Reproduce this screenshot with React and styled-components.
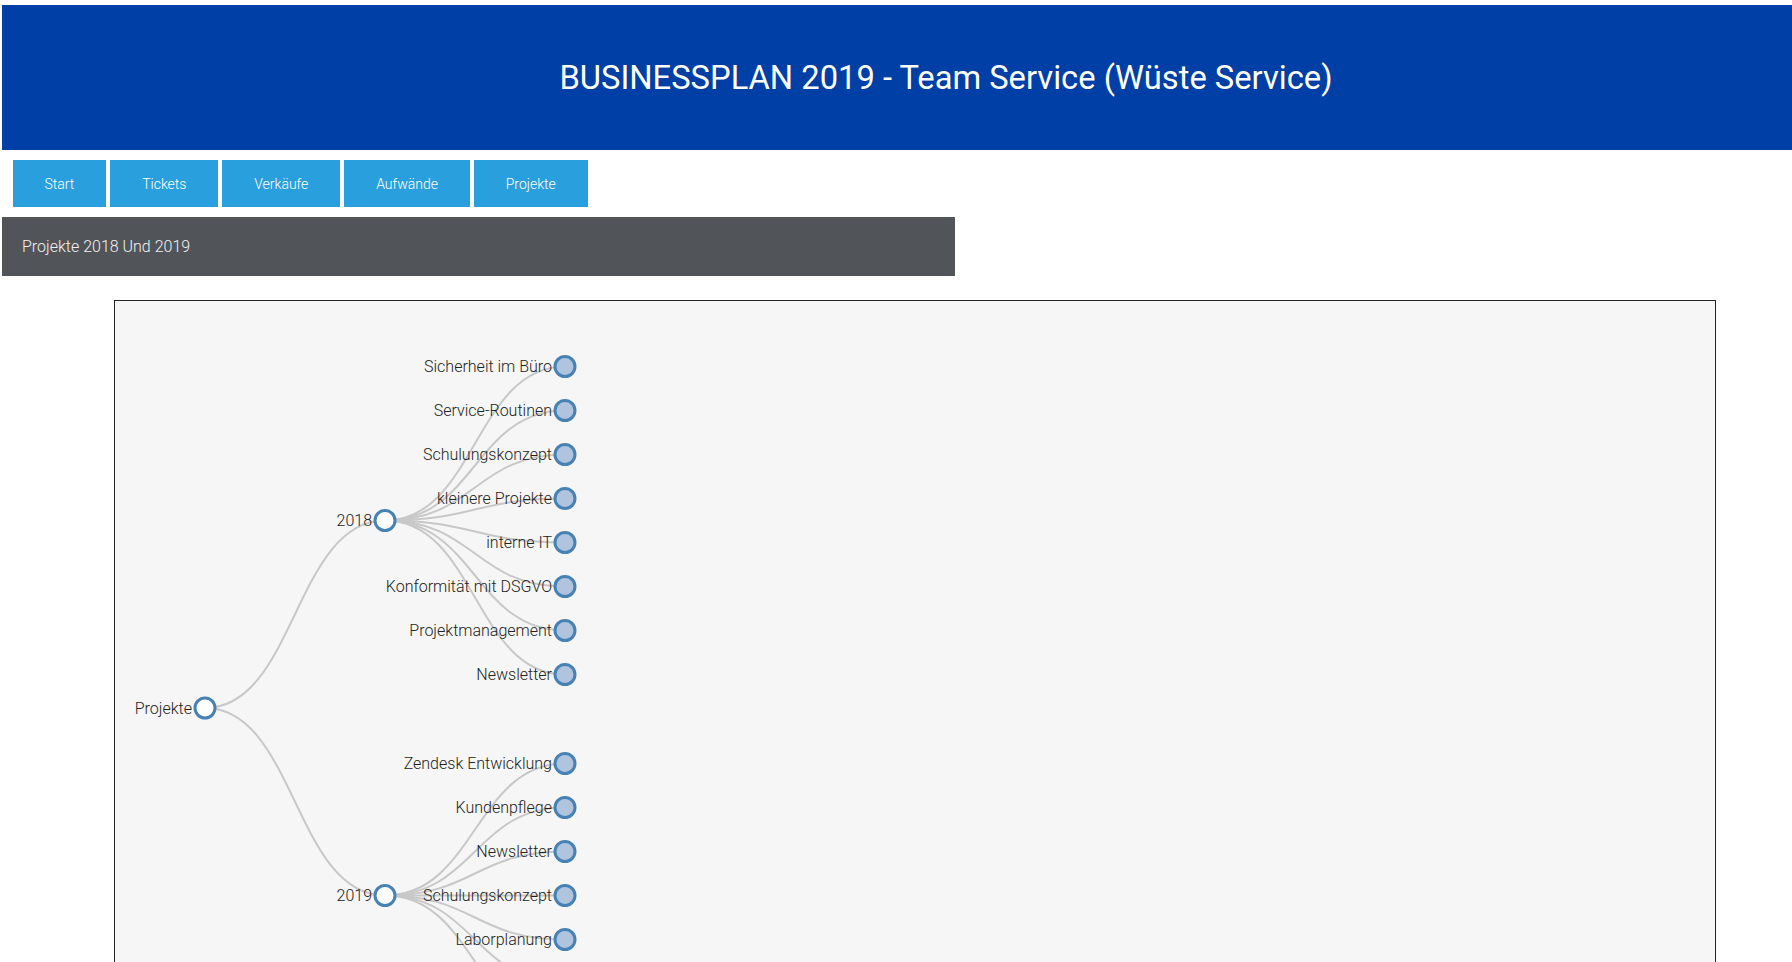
import React from "react";
import styled, { createGlobalStyle } from "styled-components";

const GlobalStyle = createGlobalStyle`
  html, body {
    margin: 0;
    padding: 0;
    background: #ffffff;
    font-family: Roboto, "Liberation Sans", Arial, sans-serif;
    overflow: hidden;
  }
`;

export const Page = styled.div`
  padding: 5px 0 0 2px;
`;
export const Header = styled.header`
  background-color: #003fa5;
  height: 145px;
  display: flex;
  align-items: center;
  justify-content: center;
  padding-left: 98px;
`;
export const Title = styled.h1`
  margin: 0;
  color: #ffffff;
  font-size: 32.7px;
  font-weight: 400;
`;
export const Nav = styled.nav`
  display: flex;
  gap: 3.8px;
  margin: 10px 0 0 10.5px;
`;
export const NavButton = styled.a`
  display: flex;
  align-items: center;
  height: 47px;
  padding: 0 32px;
  background-color: #2a9fdd;
  color: #ffffff;
  font-size: 14px;
  font-weight: 300;
  text-decoration: none;
  cursor: pointer;
`;
export const SectionBar = styled.div`
  width: 953px;
  height: 59px;
  margin-top: 10px;
  background-color: #515559;
  color: #f2f2f2;
  font-size: 16px;
  font-weight: 300;
  display: flex;
  align-items: center;
  padding-left: 20px;
  box-sizing: border-box;
`;
export const ChartBox = styled.div`
  width: 1602px;
  margin: 24px 0 0 112px;
  box-sizing: border-box;
  border: 1px solid #222;
  background-color: #f6f6f6;
`;
export const TreeSvg = styled.svg`
  display: block;
`;
export const Link = styled.path`
  fill: none;
  stroke: #c8c8c8;
  stroke-width: 2px;
`;
export const NodeCircle = styled.circle`
  fill: ${(p) => (p.$leaf ? "#b0c4de" : "#ffffff")};
  stroke: #4682b4;
  stroke-width: 3px;
`;
export const NodeLabel = styled.text`
  font-family: Roboto, "Liberation Sans", Arial, sans-serif;
  font-size: 16px;
  font-weight: 300;
  fill: #222;
`;

const menu = ["Start", "Tickets", "Verkäufe", "Aufwände", "Projekte"];

const data = {
  name: "Projekte",
  children: [
    {
      name: "2018",
      children: [
        "Sicherheit im Büro",
        "Service-Routinen",
        "Schulungskonzept",
        "kleinere Projekte",
        "interne IT",
        "Konformität mit DSGVO",
        "Projektmanagement",
        "Newsletter",
      ].map((name) => ({ name })),
    },
    {
      name: "2019",
      children: [
        "Zendesk Entwicklung",
        "Kundenpflege",
        "Newsletter",
        "Schulungskonzept",
        "Laborplanung",
        "Dokumentation",
        "Prozessoptimierung",
      ].map((name) => ({ name })),
    },
  ],
};

// simple tidy layout: leaves 44px apart, double gap between sibling groups
const layout = (root) => {
  const nodes = [];
  const links = [];
  let cursor = 65.5;
  let lastParent = null;
  const walk = (node, depth, parent) => {
    const item = { name: node.name, depth, x: 90 + depth * 180, leaf: !node.children };
    nodes.push(item);
    if (node.children) {
      const kids = node.children.map((c) => walk(c, depth + 1, item));
      item.y = (kids[0].y + kids[kids.length - 1].y) / 2;
      kids.forEach((k) => links.push({ s: item, t: k }));
    } else {
      if (lastParent && lastParent !== parent) cursor += 45;
      item.y = cursor;
      cursor += 44;
      lastParent = parent;
    }
    return item;
  };
  walk(root, 0, null);
  return { nodes, links };
};

const linkPath = ({ s, t }) => {
  const mx = (s.x + t.x) / 2;
  return `M${s.x},${s.y}C${mx},${s.y} ${mx},${t.y} ${t.x},${t.y}`;
};

const ProjectTree = () => {
  const { nodes, links } = layout(data);
  return (
    <TreeSvg width="1600" height="770">
      {links.map((l, i) => (
        <Link key={i} d={linkPath(l)} />
      ))}
      {nodes.map((n, i) => (
        <g key={i} transform={`translate(${n.x},${n.y})`}>
          <NodeCircle r="10" $leaf={n.leaf} />
          <NodeLabel x="-13" dy=".35em" textAnchor="end">
            {n.name}
          </NodeLabel>
        </g>
      ))}
    </TreeSvg>
  );
};

const App = () => {
  return (
    <>
      <GlobalStyle />
      <Page>
        <Header>
          <Title>BUSINESSPLAN 2019 - Team Service (Wüste Service)</Title>
        </Header>
        <Nav>
          {menu.map((label) => (
            <NavButton key={label}>{label}</NavButton>
          ))}
        </Nav>
        <SectionBar>Projekte 2018 Und 2019</SectionBar>
        <ChartBox>
          <ProjectTree />
        </ChartBox>
      </Page>
    </>
  );
};

export default App;
